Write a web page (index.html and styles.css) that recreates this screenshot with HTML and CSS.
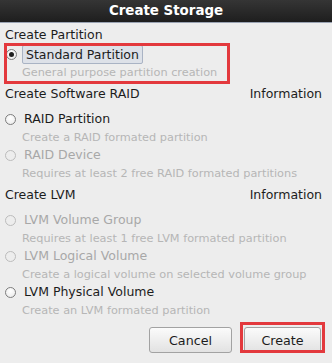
FILE: index.html
```html
<!DOCTYPE html>
<html>
<head>
<meta charset="utf-8">
<link rel="stylesheet" href="styles.css">
</head>
<body>
<div class="dialog">
  <div class="titlebar">Create Storage</div>
  <div class="content">
    <div class="section first"><span>Create Partition</span></div>
    <div class="option selected"><span class="radio on"></span><span class="label hl">Standard Partition</span></div>
    <div class="desc">General purpose partition creation</div>

    <div class="section"><span>Create Software RAID</span><span>Information</span></div>
    <div class="option"><span class="radio"></span><span class="label">RAID Partition</span></div>
    <div class="desc">Create a RAID formated partition</div>
    <div class="option disabled"><span class="radio"></span><span class="label">RAID Device</span></div>
    <div class="desc">Requires at least 2 free RAID formated partitions</div>

    <div class="section"><span>Create LVM</span><span>Information</span></div>
    <div class="option disabled"><span class="radio"></span><span class="label">LVM Volume Group</span></div>
    <div class="desc">Requires at least 1 free LVM formated partition</div>
    <div class="option disabled"><span class="radio"></span><span class="label">LVM Logical Volume</span></div>
    <div class="desc">Create a logical volume on selected volume group</div>
    <div class="option"><span class="radio"></span><span class="label">LVM Physical Volume</span></div>
    <div class="desc">Create an LVM formated partition</div>

    <div class="buttons">
      <button class="btn cancel">Cancel</button>
      <button class="btn create">Create</button>
    </div>
  </div>
  <div class="mark mark-a"></div>
  <div class="mark mark-b"></div>
</div>
</body>
</html>
```
FILE: styles.css
```css
html, body {
  margin: 0;
  padding: 0;
}
body {
  width: 332px;
  height: 363px;
  overflow: hidden;
  background: #ededed;
  font-family: "DejaVu Sans", sans-serif;
  color: #1c1c1c;
}
.dialog {
  position: relative;
  width: 332px;
  height: 363px;
  background: #ededed;
}
.titlebar {
  height: 22px;
  line-height: 22px;
  text-align: center;
  font-weight: bold;
  font-size: 13.4px;
  color: #ffffff;
  background: linear-gradient(#353535, #1e1e1e);
  border-bottom: 1px solid #9aa3b3;
}
.content {
  display: flex;
  flex-direction: column;
}
.section {
  box-sizing: border-box;
  height: 29px;
  padding: 5px 10px 0 5px;
  line-height: 18px;
  font-size: 12.5px;
  display: flex;
  justify-content: space-between;
}
.section.first {
  height: 22px;
  padding-top: 3px;
}
.option {
  box-sizing: border-box;
  height: 20px;
  display: flex;
  align-items: center;
  padding-left: 5px;
  gap: 8px;
  font-size: 12.5px;
}
.option.selected {
  height: 19px;
  padding-left: 6px;
  gap: 5px;
}
.label {
  line-height: 18px;
}
.label.hl {
  box-sizing: border-box;
  height: 19px;
  line-height: 17px;
  padding: 0 3px;
  border: 1px solid #a9b3c4;
  border-radius: 2px;
  background: #dde1e8;
}
.radio {
  box-sizing: border-box;
  width: 11px;
  height: 11px;
  border-radius: 50%;
  border: 1px solid #7d7d7d;
  background: radial-gradient(circle at 50% 35%, #ffffff, #e8e8e8);
  position: relative;
  flex: none;
}
.radio.on::after {
  content: "";
  position: absolute;
  left: 2px;
  top: 2px;
  width: 5px;
  height: 5px;
  border-radius: 50%;
  background: #202020;
}
.option.disabled {
  color: #a8a8a8;
}
.option.disabled .radio {
  border-color: #bcbcbc;
  background: #ededed;
}
.desc {
  box-sizing: border-box;
  height: 16px;
  padding: 2px 0 0 22px;
  line-height: 14px;
  font-size: 11.3px;
  color: #b6b6b6;
  white-space: nowrap;
}
.buttons {
  display: flex;
  justify-content: flex-end;
  gap: 12px;
  margin-top: 9px;
  padding-right: 11px;
}
.btn {
  box-sizing: border-box;
  height: 26px;
  font-family: "DejaVu Sans", sans-serif;
  font-size: 12.7px;
  color: #1c1c1c;
  border: 1px solid #a2a2a2;
  border-radius: 3px;
  background: linear-gradient(#fbfbfb, #e2e2e2);
  padding: 0;
}
.btn.cancel {
  width: 83px;
}
.btn.create {
  width: 77px;
}
.mark {
  position: absolute;
  box-sizing: border-box;
  border: 3px solid #e3393d;
}
.mark-a {
  left: 4px;
  top: 43px;
  width: 226px;
  height: 41px;
}
.mark-b {
  left: 240px;
  top: 322px;
  width: 85px;
  height: 31px;
}
```
